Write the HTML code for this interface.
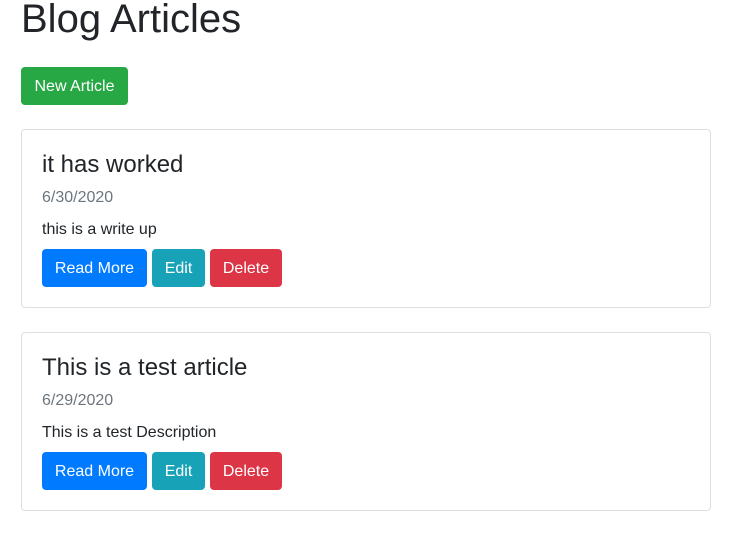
<!DOCTYPE html>
<html><head><style>
body{margin:0;font-family:"Liberation Sans",Arial,sans-serif;color:#212529;background:#fff;width:748px;height:552px;position:relative;overflow:hidden}
h1{position:absolute;left:21px;top:-5px;margin:0;font-size:40px;font-weight:400;line-height:48px}
.btn{position:absolute;height:38px;line-height:40px;color:#fff;font-size:16px;text-align:center;border-radius:4px}
.card{position:absolute;left:21px;width:688px;height:177px;border:1px solid #dfdfdf;border-radius:4px}
.t{position:absolute;left:20px;font-size:24px;line-height:29px}
.d{position:absolute;left:20px;font-size:16px;color:#6c757d;line-height:20px}
.p{position:absolute;left:20px;font-size:16px;line-height:20px}
.rm{left:20px;width:105px;background:#007bff}
.ed{left:130px;width:53px;background:#17a2b8}
.de{left:188px;width:72px;background:#dc3545}
</style></head><body>
<h1>Blog Articles</h1>
<div class="btn" style="left:21px;top:67px;width:107px;background:#28a745">New Article</div>
<div class="card" style="top:129px">
<div class="t" style="top:20px">it has worked</div>
<div class="d" style="top:58px">6/30/2020</div>
<div class="p" style="top:90px">this is a write up</div>
<div class="btn rm" style="top:119px">Read More</div>
<div class="btn ed" style="top:119px">Edit</div>
<div class="btn de" style="top:119px">Delete</div>
</div>
<div class="card" style="top:332px">
<div class="t" style="top:20px">This is a test article</div>
<div class="d" style="top:58px">6/29/2020</div>
<div class="p" style="top:90px">This is a test Description</div>
<div class="btn rm" style="top:119px">Read More</div>
<div class="btn ed" style="top:119px">Edit</div>
<div class="btn de" style="top:119px">Delete</div>
</div>
</body></html>
